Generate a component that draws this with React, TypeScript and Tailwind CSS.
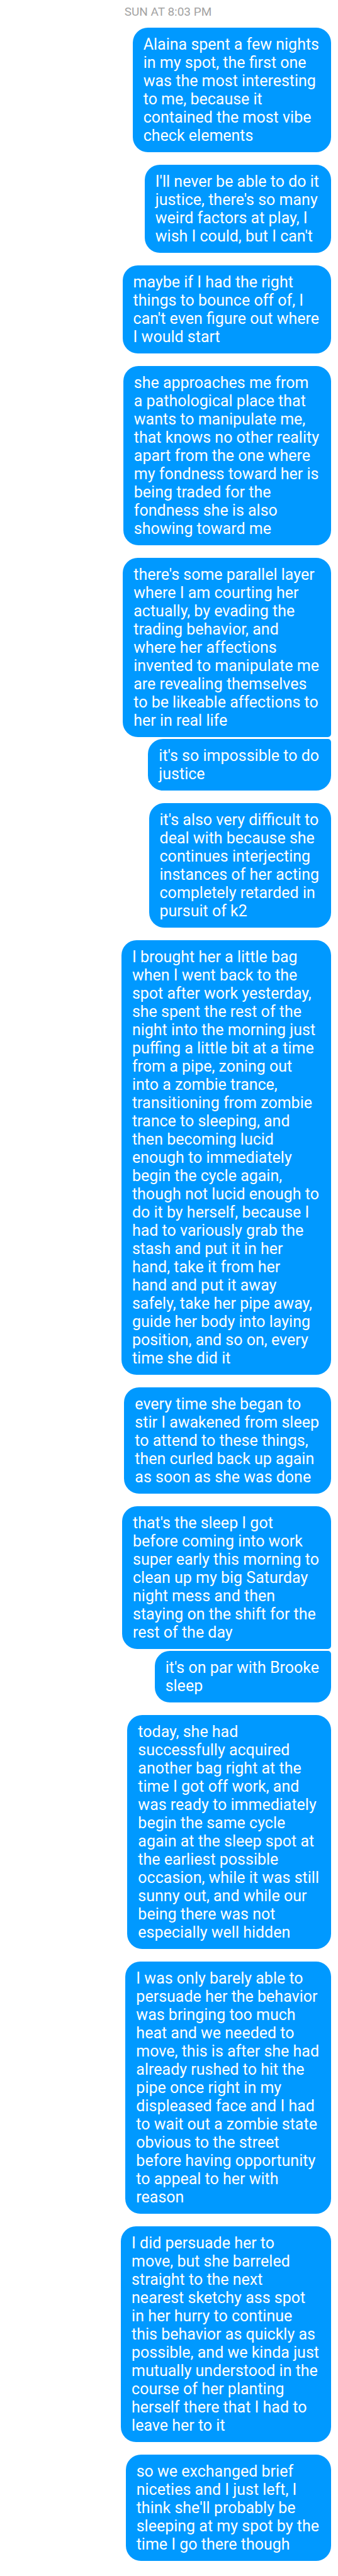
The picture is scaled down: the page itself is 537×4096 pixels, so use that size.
type Message = { lines: string[] };

// Each group holds messages sent in quick succession.
const groups: Message[][] = [
  [{ lines: ["Alaina spent a few nights", "in my spot, the first one", "was the most interesting", "to me, because it", "contained the most vibe", "check elements"] }],
  [{ lines: ["I'll never be able to do it", "justice, there's so many", "weird factors at play, I", "wish I could, but I can't"] }],
  [{ lines: ["maybe if I had the right", "things to bounce off of, I", "can't even figure out where", "I would start"] }],
  [
    {
      lines: [
        "she approaches me from",
        "a pathological place that",
        "wants to manipulate me,",
        "that knows no other reality",
        "apart from the one where",
        "my fondness toward her is",
        "being traded for the",
        "fondness she is also",
        "showing toward me",
      ],
    },
  ],
  [
    {
      lines: [
        "there's some parallel layer",
        "where I am courting her",
        "actually, by evading the",
        "trading behavior, and",
        "where her affections",
        "invented to manipulate me",
        "are revealing themselves",
        "to be likeable affections to",
        "her in real life",
      ],
    },
    { lines: ["it's so impossible to do", "justice"] },
  ],
  [
    {
      lines: [
        "it's also very difficult to",
        "deal with because she",
        "continues interjecting",
        "instances of her acting",
        "completely retarded in",
        "pursuit of k2",
      ],
    },
  ],
  [
    {
      lines: [
        "I brought her a little bag",
        "when I went back to the",
        "spot after work yesterday,",
        "she spent the rest of the",
        "night into the morning just",
        "puffing a little bit at a time",
        "from a pipe, zoning out",
        "into a zombie trance,",
        "transitioning from zombie",
        "trance to sleeping, and",
        "then becoming lucid",
        "enough to immediately",
        "begin the cycle again,",
        "though not lucid enough to",
        "do it by herself, because I",
        "had to variously grab the",
        "stash and put it in her",
        "hand, take it from her",
        "hand and put it away",
        "safely, take her pipe away,",
        "guide her body into laying",
        "position, and so on, every",
        "time she did it",
      ],
    },
  ],
  [
    {
      lines: [
        "every time she began to",
        "stir I awakened from sleep",
        "to attend to these things,",
        "then curled back up again",
        "as soon as she was done",
      ],
    },
  ],
  [
    {
      lines: [
        "that's the sleep I got",
        "before coming into work",
        "super early this morning to",
        "clean up my big Saturday",
        "night mess and then",
        "staying on the shift for the",
        "rest of the day",
      ],
    },
    { lines: ["it's on par with Brooke", "sleep"] },
  ],
  [
    {
      lines: [
        "today, she had",
        "successfully acquired",
        "another bag right at the",
        "time I got off work, and",
        "was ready to immediately",
        "begin the same cycle",
        "again at the sleep spot at",
        "the earliest possible",
        "occasion, while it was still",
        "sunny out, and while our",
        "being there was not",
        "especially well hidden",
      ],
    },
  ],
  [
    {
      lines: [
        "I was only barely able to",
        "persuade her the behavior",
        "was bringing too much",
        "heat and we needed to",
        "move, this is after she had",
        "already rushed to hit the",
        "pipe once right in my",
        "displeased face and I had",
        "to wait out a zombie state",
        "obvious to the street",
        "before having opportunity",
        "to appeal to her with",
        "reason",
      ],
    },
  ],
  [
    {
      lines: [
        "I did persuade her to",
        "move, but she barreled",
        "straight to the next",
        "nearest sketchy ass spot",
        "in her hurry to continue",
        "this behavior as quickly as",
        "possible, and we kinda just",
        "mutually understood in the",
        "course of her planting",
        "herself there that I had to",
        "leave her to it",
      ],
    },
  ],
  [
    {
      lines: [
        "so we exchanged brief",
        "niceties and I just left, I",
        "think she'll probably be",
        "sleeping at my spot by the",
        "time I go there though",
      ],
    },
  ],
];

function Bubble({ lines, first, last }: Message & { first: boolean; last: boolean }) {
  return (
    <p
      className={`rounded-l-[24px] bg-[#0099ff] py-3 pr-[19px] pl-[17px] text-[25px] leading-[29px] whitespace-pre-line text-white ${
        first ? "rounded-tr-[24px]" : "rounded-tr-[5px]"
      } ${last ? "rounded-br-[24px]" : "rounded-br-[5px]"}`}
    >
      {lines.join("\n")}
    </p>
  );
}

export default function App() {
  return (
    <main className="min-h-screen bg-white pt-1.5 pr-[11px] pb-6 font-['Roboto',sans-serif]">
      <h1 className="mb-3 pl-2 text-center text-[19px] leading-[26px] font-normal text-[#a3a3a3]">SUN AT 8:03 PM</h1>
      <div className="flex flex-col gap-5">
        {groups.map((group, g) => (
          <section key={g} className="flex flex-col items-end gap-[3px]">
            {group.map((message, m) => (
              <Bubble key={m} lines={message.lines} first={m === 0} last={m === group.length - 1} />
            ))}
          </section>
        ))}
      </div>
    </main>
  );
}
